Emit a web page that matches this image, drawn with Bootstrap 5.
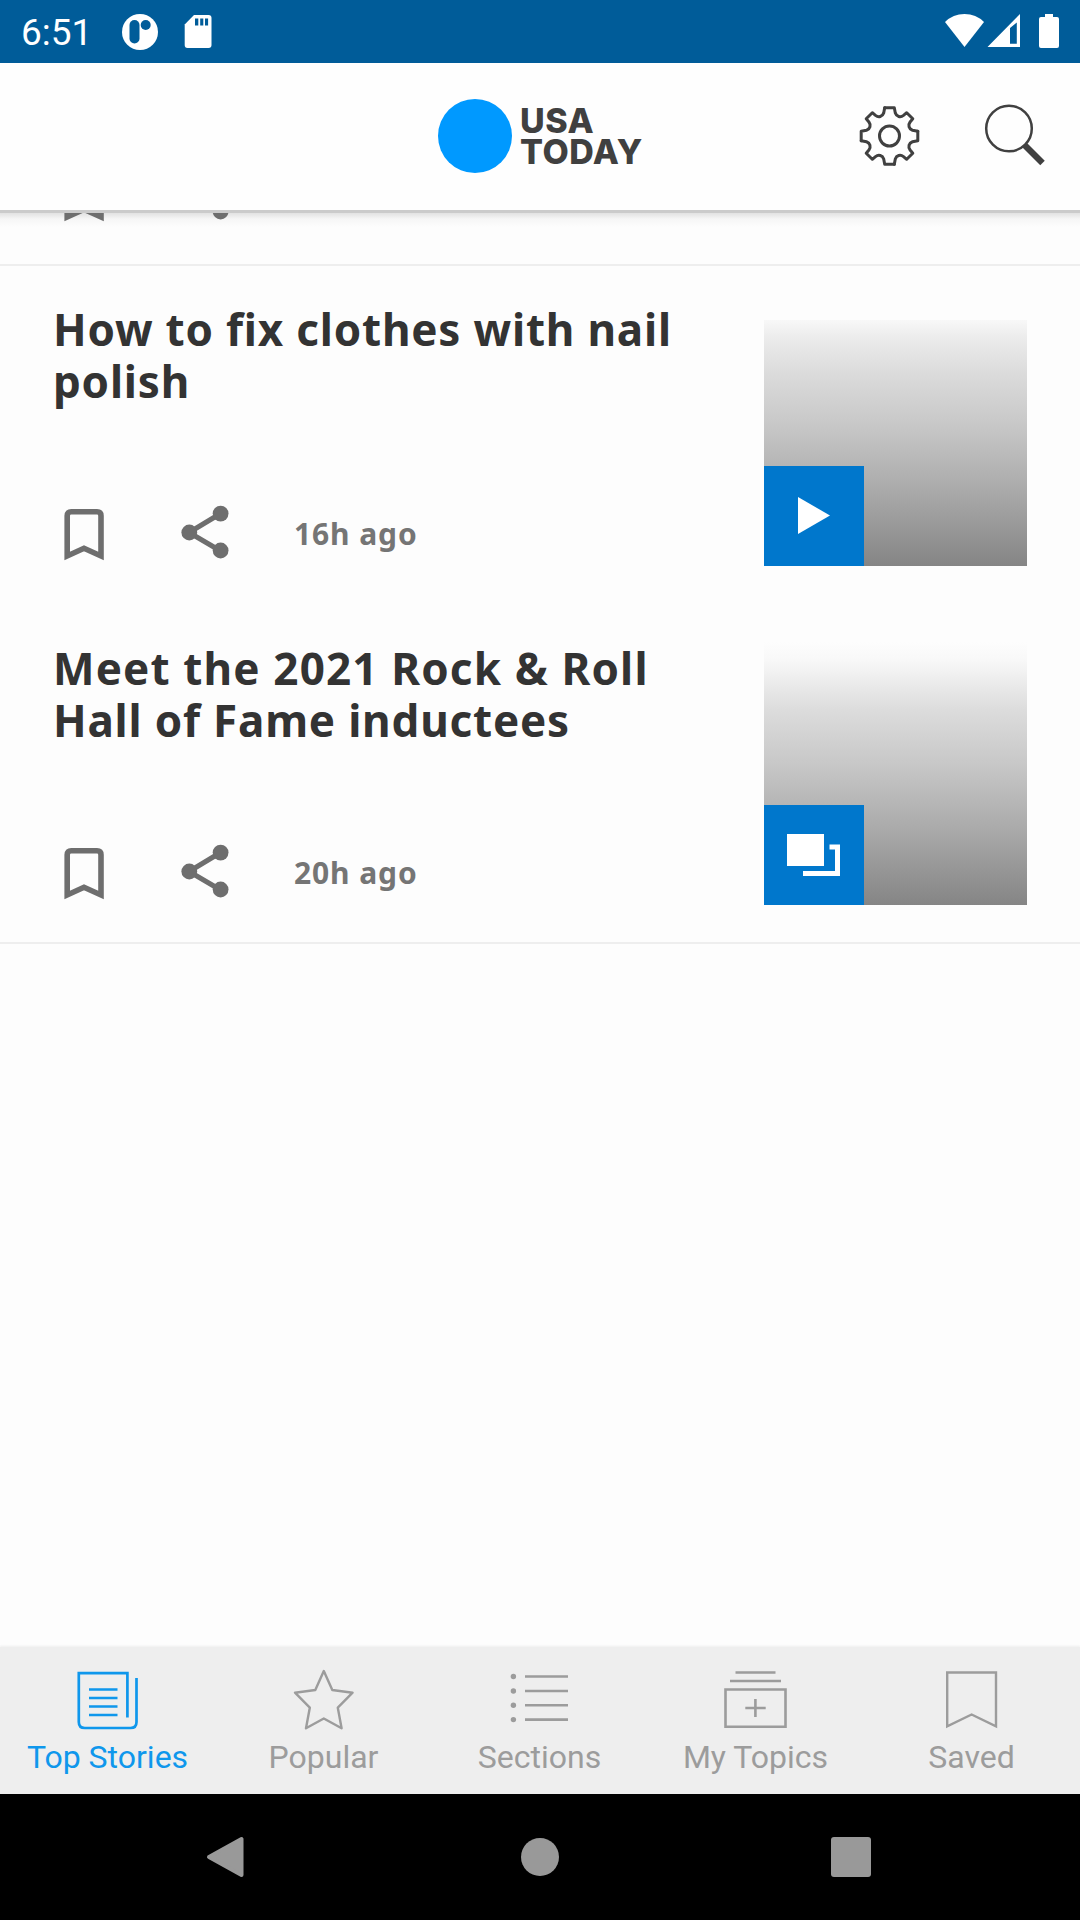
<!DOCTYPE html>
<html lang="en">
<head>
<meta charset="utf-8">
<meta name="viewport" content="width=device-width, initial-scale=1">
<title>USA TODAY - Top Stories</title>
<link href="https://cdn.jsdelivr.net/npm/bootstrap@5.3.0/dist/css/bootstrap.min.css" rel="stylesheet">
<style>
body{font-family:Roboto,"Liberation Sans",sans-serif;background:#fdfdfd;color:#333}
.screen{width:1080px;height:1920px}
svg{display:block;flex:none}
.statusbar{height:63px;background:#005c99;color:#fff;padding-left:21px;padding-right:21px}
.clock{font-size:37px;line-height:63px;width:101px;padding-top:2px}
.topbar{height:147px;background:#fefefe;padding-bottom:2px}
.brand{padding-left:438px}
.logo-name{font-family:Inter,"Open Sans",sans-serif;font-weight:800;font-size:34px;line-height:31px;letter-spacing:.5px;color:#404040}
.logo-name span{display:block}
.barline{height:3px;background:#cbcbcb;flex:none}
.feed{background:linear-gradient(#e2e2e2,#f6f6f6 6px,#fdfdfd 14px)}
.tail{height:51px}
.story{height:340px;padding:0 53px 0 53px}
.story-a{border-top:2px solid #eee;padding-top:37px}
.story-b{border-bottom:2px solid #eee;padding-top:38px}
.headline{font-family:"Noto Sans","Open Sans",sans-serif;font-weight:700;font-size:44px;line-height:52px;letter-spacing:.8px;color:#333;margin:0;white-space:nowrap}
.headline span{display:block}
.headline .loose{letter-spacing:1.15px}
.actions{height:56px;margin-bottom:43px;color:#6e6e6e}
.story-b .actions{margin-bottom:42px}
.tail .actions{padding-left:54px;margin-bottom:42px}
.actions svg{margin-left:1px}
.tail svg{margin-left:0}
.ago{font-family:"Noto Sans","Open Sans",sans-serif;font-weight:700;font-size:30px;line-height:58px;letter-spacing:.9px;color:#757575}
.thumb{width:263px;height:263px;background:linear-gradient(#fdfdfd 0,#f8f8f8 7%,#e9e9e9 17%,#dcdcdc 26%,#c8c8c8 46%,#a9a9a9 72%,#858585 100%)}
.story-a .thumb{background:linear-gradient(#fdfdfd 17px,#f8f8f8 17px,#ececec 13%,#dcdcdc 26%,#c8c8c8 46%,#a9a9a9 72%,#858585 100%)}
.kind{width:100px;height:100px;background:#0077cc}
.tabs{height:147px;background:#eee;box-shadow:0 -1px 2px #eee;color:#9c9c9c}
.tab{width:216px;padding-top:17px;padding-right:1px;font-size:32px;line-height:42px}
.tab.on{color:#0f97ec}
.sysnav{height:126px}
</style>
<script src="https://cdn.jsdelivr.net/npm/bootstrap@5.3.0/dist/js/bootstrap.bundle.min.js"></script>
</head>
<body>
<svg width="0" height="0" class="position-absolute">
  <defs>
    <symbol id="actions" viewBox="0 0 184 56">
      <path d="M13.200 51V10.700Q13.200 6.700 17.200 6.700H43Q47 6.700 47 10.700V51L30 43.300Z" fill="none" stroke="currentColor" stroke-width="5.600"/>
      <path d="M166.600 8.500L135 27.500L166.600 46" fill="none" stroke="currentColor" stroke-width="5"/>
      <circle cx="166.600" cy="8.600" r="7.900" fill="currentColor"/><circle cx="135.300" cy="27.500" r="7.900" fill="currentColor"/><circle cx="166.600" cy="45.500" r="7.900" fill="currentColor"/>
    </symbol>
    <path id="gearq" d="M-4.800 -28.300H4.800L5.800 -23C7 -19.300 11 -18.300 14 -20.600L17.200 -23.300L23.300 -17.200L20.600 -14C18.300 -11 19.300 -7 23 -5.800L28.300 -4.800"/>
  </defs>
</svg>
<div class="screen d-flex flex-column overflow-hidden">
  <header class="statusbar d-flex align-items-center justify-content-between">
    <div class="d-flex align-items-center">
      <span class="clock">6:51</span>
      <svg width="92" height="63" viewBox="122 0 92 63"><circle cx="140" cy="32" r="18" fill="#fff"/><rect x="129.500" y="20" width="10" height="23.500" rx="5" fill="#005c99"/><circle cx="145.700" cy="25" r="5" fill="#005c99"/><path d="M194 15H208.500Q211.500 15 211.500 18V45Q211.500 48 208.500 48H187.500Q184.700 48 184.700 45V24.500Z" fill="#fff"/><path d="M195 18.500h3.300v7H195zM200.200 18.500h3.100v7h-3.100zM205 18.500h3.100v7H205z" fill="#005c99"/></svg>
    </div>
    <svg width="116" height="63" viewBox="943 0 116 63" fill="#fff"><path d="M945 22Q953 14 964.500 14T984 22L964.500 47Z"/><path fill-rule="evenodd" d="M1020 14V47H987.500ZM1010 28V43.800H1016.800V22.500Z"/><path d="M1045 14h8v3h4q2 0 2 2v27q0 2-2 2h-16q-2 0-2-2V19q0-2 2-2h4z"/></svg>
  </header>
  <nav class="topbar d-flex justify-content-end align-items-center">
    <div class="brand d-flex align-items-center me-auto">
      <svg width="82" height="74" viewBox="0 0 82 74"><circle cx="37" cy="37" r="37" fill="#09f"/></svg>
      <div class="logo-name"><span>USA</span><span>TODAY</span></div>
    </div>
    <svg width="64" height="64" viewBox="-31.500 -32 64 64" fill="none" stroke="#404040" stroke-width="3" stroke-linejoin="round" stroke-linecap="round"><use href="#gearq"/><use href="#gearq" transform="rotate(90)"/><use href="#gearq" transform="rotate(180)"/><use href="#gearq" transform="rotate(270)"/><circle r="10"/></svg>
    <svg width="158" height="74" viewBox="922 98 158 74" fill="none" stroke="#404040"><circle cx="1009" cy="127.500" r="22.800" stroke-width="2.500"/><path d="M1024.500 144L1042.500 162" stroke-width="6.300"/></svg>
  </nav>
  <div class="barline"></div>
  <main class="feed flex-grow-1">
    <div class="tail d-flex align-items-end overflow-hidden">
      <div class="actions"><svg width="184" height="56"><use href="#actions"/></svg></div>
    </div>
    <article class="story story-a d-flex justify-content-between">
      <div class="d-flex flex-column justify-content-between">
        <h2 class="headline"><span>How to fix clothes with nail</span><span>polish</span></h2>
        <div class="actions d-flex"><svg width="184" height="56"><use href="#actions"/></svg><span class="ago ms-5 ps-2">16h ago</span></div>
      </div>
      <div class="thumb d-flex align-items-end"><div class="kind"><svg width="100" height="100"><path d="M34 31L66 49.500L34 68Z" fill="#fff"/></svg></div></div>
    </article>
    <article class="story story-b d-flex justify-content-between">
      <div class="d-flex flex-column justify-content-between">
        <h2 class="headline"><span class="loose">Meet the 2021 Rock &amp; Roll</span><span>Hall of Fame inductees</span></h2>
        <div class="actions d-flex"><svg width="184" height="56"><use href="#actions"/></svg><span class="ago ms-5 ps-2">20h ago</span></div>
      </div>
      <div class="thumb d-flex align-items-end"><div class="kind"><svg width="100" height="100" fill="#fff"><path d="M23 29h37v32H23zM65.500 39.500H76V71H39V66H71V44.500H65.500z"/></svg></div></div>
    </article>
  </main>
  <footer class="tabs d-flex flex-shrink-0">
    <div class="tab on d-flex flex-column align-items-center"><svg width="72" height="72" fill="none" stroke="currentColor" stroke-width="2.700"><path d="M55.400 53.500V9.200H6.800V58Q6.800 64 12.800 64H58.500Q64.500 64 64.500 58V14M17 25.500H45.500M17 34H45.500M17 42.500H45.500M17 51H45.500"/></svg><span>Top Stories</span></div>
    <div class="tab d-flex flex-column align-items-center"><svg width="72" height="72" fill="none" stroke="currentColor" stroke-width="2.400" stroke-linejoin="round"><path d="M35.800 7L44.300 26L64.600 28.700L49.800 43.700L53.600 64.300L35.800 54.500L18 64.300L21.800 43.700L7 28.700L27.300 26Z"/></svg><span>Popular</span></div>
    <div class="tab d-flex flex-column align-items-center"><svg width="72" height="72" fill="currentColor"><path d="M21 12.500H64M21 27H64M21 41.300H64M21 55.600H64" stroke="currentColor" stroke-width="2.600"/><circle cx="9.400" cy="12.500" r="2.700"/><circle cx="9.400" cy="27" r="2.700"/><circle cx="9.400" cy="41.300" r="2.700"/><circle cx="9.400" cy="55.600" r="2.700"/></svg><span>Sections</span></div>
    <div class="tab d-flex flex-column align-items-center"><svg width="72" height="72" fill="none" stroke="currentColor" stroke-width="2.600"><path d="M15.500 8.500H55.500M10 17H61M5.500 25.500H65.500V62.700H5.500ZM25.300 44H45.700M35.400 35V53"/></svg><span>My Topics</span></div>
    <div class="tab d-flex flex-column align-items-center"><svg width="72" height="72" fill="none" stroke="currentColor" stroke-width="2.400"><path d="M11.200 8.500H60V62.300L35.600 50.500L11.200 62.300Z"/></svg><span>Saved</span></div>
  </footer>
  <div class="sysnav bg-black flex-shrink-0 d-flex">
    <svg width="1080" height="126" fill="#999" stroke="#999" stroke-linejoin="round"><path d="M209 63L241.500 45V81Z" stroke-width="4"/><circle cx="540" cy="63" r="19" stroke="none"/><rect x="831" y="43" width="40" height="40" rx="3" stroke="none"/></svg>
  </div>
</div>
</body>
</html>
